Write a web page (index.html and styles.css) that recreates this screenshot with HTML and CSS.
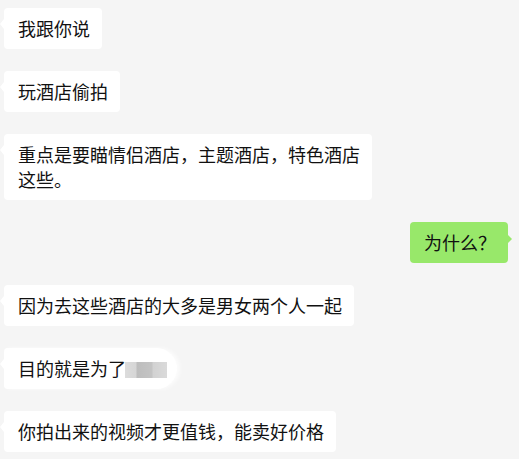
FILE: index.html
```html
<!DOCTYPE html>
<html lang="zh-CN">
<head>
<meta charset="utf-8">
<link rel="stylesheet" href="styles.css">
</head>
<body>
<div class="chat">
  <div class="msg left"><div class="bubble">我跟你说</div></div>
  <div class="msg left"><div class="bubble">玩酒店偷拍</div></div>
  <div class="msg left"><div class="bubble">重点是要瞄情侣酒店，主题酒店，特色酒店这些。</div></div>
  <div class="msg right"><div class="bubble green">为什么？</div></div>
  <div class="msg left"><div class="bubble">因为去这些酒店的大多是男女两个人一起</div></div>
  <div class="msg left"><div class="bubble blurred">目的就是为了<span class="mask"></span></div></div>
  <div class="msg left"><div class="bubble">你拍出来的视频才更值钱，能卖好价格</div></div>
</div>
</body>
</html>
```

FILE: styles.css
```css
html, body {
  margin: 0;
  padding: 0;
  background: #f5f5f5;
}
.chat {
  display: flex;
  flex-direction: column;
  gap: 22px;
  padding: 8px 11px 0 4px;
  font-family: "Noto Sans CJK SC", "Microsoft YaHei", sans-serif;
  font-size: 18px;
  line-height: 25px;
  color: #111111;
}
.msg {
  display: flex;
}
.msg.left { justify-content: flex-start; }
.msg.right { justify-content: flex-end; }
.bubble {
  position: relative;
  background: #ffffff;
  border-radius: 4px;
  padding: 8px 12px 8px 14px;
  max-width: 342px;
  word-break: break-all;
}
.msg.left .bubble::before {
  content: "";
  position: absolute;
  left: -4px;
  top: 11px;
  border-style: solid;
  border-width: 5px 4px 5px 0;
  border-color: transparent #ffffff transparent transparent;
}
.bubble.green {
  background: #98e86a;
}
.msg.right .bubble::after {
  content: "";
  position: absolute;
  right: -4px;
  top: 13px;
  border-style: solid;
  border-width: 4px 0 4px 4px;
  border-color: transparent transparent transparent #98e86a;
}
.bubble.blurred {
  padding-right: 10px;
  border-radius: 4px 22px 22px 4px;
  box-shadow: 3px 0 4px rgba(255, 255, 255, 0.7);
}
.mask {
  display: inline-block;
  width: 42px;
  height: 16px;
  vertical-align: -2px;
  margin-left: -1px;
  background: linear-gradient(90deg, #dcdcdc 0, #d6d6d6 11px, #bdbdbd 12px, #c4c4c4 27px, #d2d2d2 28px, #dadada 42px);
  filter: blur(0.6px);
}
```
